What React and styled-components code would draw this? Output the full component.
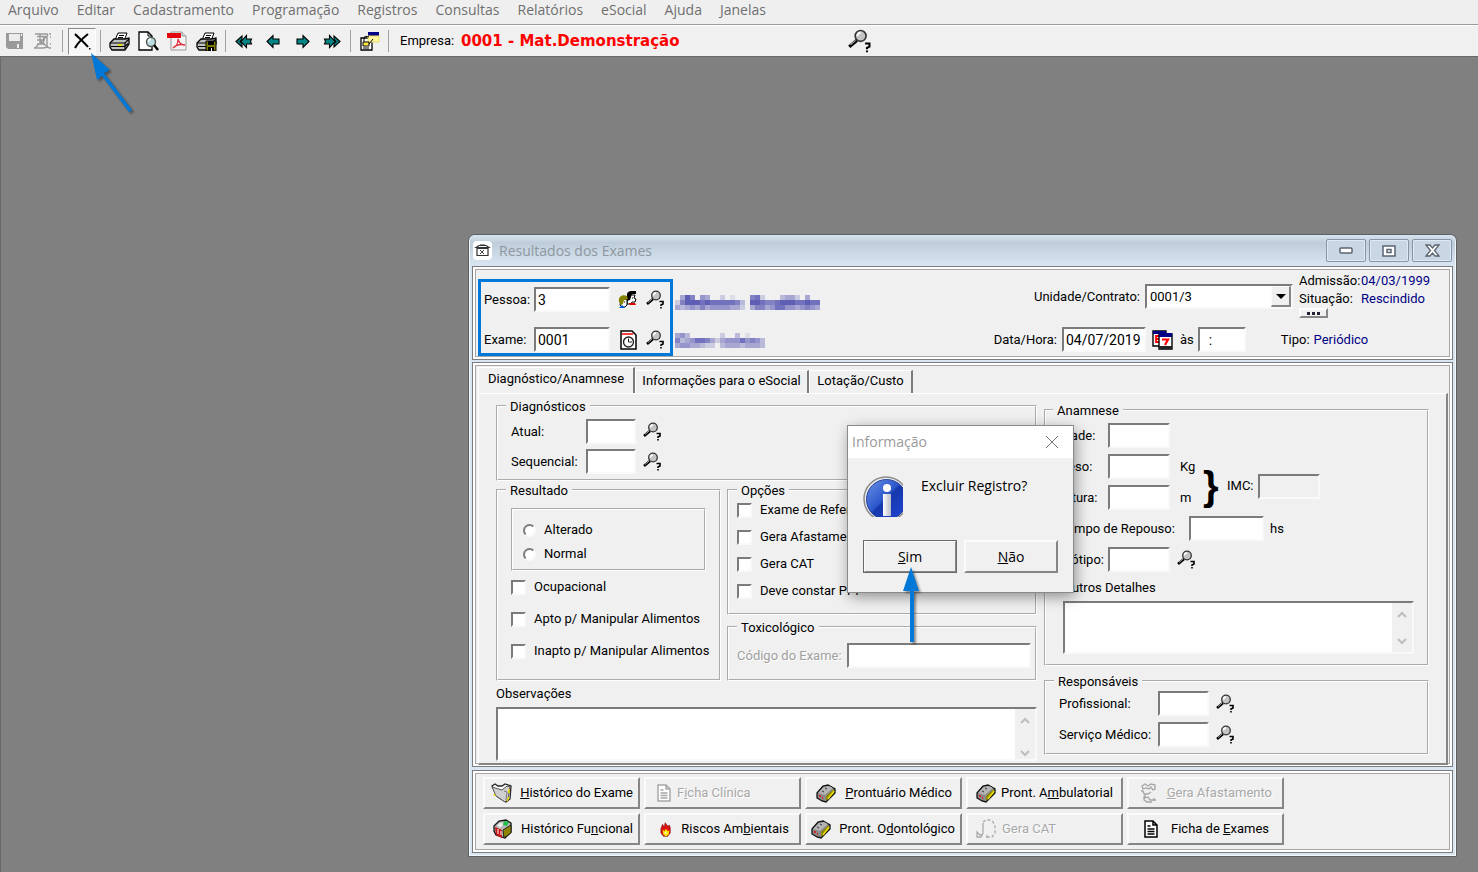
import React from "react";
import styled, { createGlobalStyle, css } from "styled-components";

const Global = createGlobalStyle`
  *, *::before, *::after { box-sizing: border-box; }
  body { margin: 0; background: #808080; color: #000; font: 13px/16px Roboto, "Liberation Sans", sans-serif; }
  button, input, select, textarea { font: inherit; color: inherit; margin: 0; border-radius: 0; }
  svg { flex: none; }
`;

const uiFont = css`
  font-family: "Open Sans", "Noto Sans", sans-serif;
  font-size: 14px;
`;
const sunken = css`
  border: 2px solid;
  border-color: #7b7b7b #f9f9f9 #f9f9f9 #7b7b7b;
`;
const raised = css`
  border: 2px solid;
  border-color: #fbfbfb #868686 #868686 #fbfbfb;
`;

/* ---------- application shell ---------- */
const Shell = styled.div`
  min-height: 100vh;
  display: flex;
  flex-direction: column;
`;
const MenuBar = styled.nav`
  ${uiFont}
  display: flex;
  gap: 18px;
  height: 25px;
  padding: 0 8px;
  background: #efefef;
  border-bottom: 1px solid #9c9c9c;
`;
const MenuItem = styled.button`
  border: 0;
  padding: 0 0 4px;
  background: none;
  color: #6f6f6f;
  line-height: 20px;
`;
const Toolbar = styled.div`
  display: flex;
  align-items: center;
  height: 31px;
  padding: 0 4px;
  background: #f0f0f0;
  border-top: 1px solid #fff;
`;
const ToolGroup = styled.div`
  display: flex;
  gap: 8px;
`;
const ToolButton = styled.button`
  display: flex;
  align-items: center;
  justify-content: center;
  width: ${(p) => p.$w || 21}px;
  height: 27px;
  padding: 0;
  border: ${(p) => (p.$pressed ? "1px solid" : "0")};
  border-color: #8a8a8a #fff #fff #8a8a8a;
  background: ${(p) => (p.$pressed ? "#f7f7f7" : "none")};
`;
const Separator = styled.span`
  width: 1px;
  height: 22px;
  margin: 0 ${(p) => p.$after || 8}px 0 ${(p) => p.$before || 8}px;
  background: #a0a0a0;
`;
const CompanyLabel = styled.span`
  flex: 0 0 61px;
`;
const CompanyName = styled.strong`
  flex: 0 0 387px;
  color: #f00;
  font: bold 15px/18px "DejaVu Sans", sans-serif;
`;
const Desktop = styled.main`
  position: relative;
  flex: 1;
  background: #808080;
  border-top: 1px solid #696969;
  border-left: 1px solid #696969;
`;

/* ---------- child window ---------- */
const Window = styled.section`
  position: absolute;
  top: 177px;
  left: 467px;
  right: 21px;
  padding: 0 3px 3px;
  background: #d9e5f2;
  border: 1px solid #5c6166;
  border-radius: 7px 7px 0 0;
  box-shadow: inset 0 0 0 1px #f3f8fd;
`;
const TitleBar = styled.header`
  ${uiFont}
  display: flex;
  align-items: center;
  gap: 6px;
  height: 31px;
  margin: 0 -2px;
  padding: 0 3px;
  border-radius: 6px 6px 0 0;
  background: linear-gradient(#d8e4ef, #bfcddb 25%, #d9e5f2);
  color: #8e979f;
`;
const Title = styled.h1`
  flex: 1;
  margin: 0;
  font-size: 14px;
  font-weight: 400;
`;
const CaptionButtons = styled.div`
  display: flex;
  gap: 3px;
`;
const CaptionButton = styled.button`
  display: flex;
  align-items: center;
  justify-content: center;
  width: 40px;
  height: 23px;
  padding: 0;
  border: 1px solid #8695a6;
  border-radius: 2px;
  background: #c9d6e4;
  box-shadow: inset 0 0 0 1px #dfe9f3;
`;
const Panel = styled.div`
  margin-bottom: ${(p) => p.$gap || 0}px;
  padding: ${(p) => p.$pad};
  background: #f0f0f0;
  border: 1px solid #7d7d7d;
  box-shadow: inset 0 0 0 2px #fff, inset 0 0 0 3px #a6a6a6;
`;
const HeaderLayout = styled(Panel)`
  display: flex;
  align-items: flex-start;
  gap: 2px;
`;
const KeyFields = styled.div`
  display: flex;
  flex-direction: column;
  gap: 15px;
  width: 195px;
  margin-top: 7px;
  padding: 5px 3px 1px;
  border: 3px solid #0078d7;
`;
const KeyRow = styled.div`
  display: grid;
  grid-template-columns: 50px 76px 36px 19px;
  align-items: center;
`;
const IconCell = styled.span`
  display: flex;
  justify-content: center;
`;
const Names = styled.div`
  flex: 1;
  display: flex;
  flex-direction: column;
  gap: 23px;
  padding-top: 23px;
`;
const Contract = styled.div`
  display: flex;
  flex-direction: column;
  gap: 9px;
  width: 450px;
`;
const ContractRow = styled.div`
  display: flex;
  align-items: center;
  padding-top: ${(p) => p.$top || 0}px;
`;
const ContractTop = styled.div`
  display: flex;
  align-items: flex-start;
`;
const ContractLabel = styled.label`
  flex: 0 0 ${(p) => p.$w}px;
  padding-right: 5px;
  text-align: right;
  white-space: nowrap;
`;
const SelectFrame = styled.span`
  position: relative;
  display: flex;
  flex: 0 0 148px;
  margin-right: 6px;
`;
const Select = styled.select`
  ${sunken}
  width: 100%;
  height: 25px;
  padding: 0 3px;
  background: #fff;
  appearance: none;
`;
const SelectArrow = styled.span`
  position: absolute;
  top: 2px;
  right: 2px;
  display: flex;
  align-items: center;
  justify-content: center;
  width: 20px;
  height: 21px;
  background: #f0f0f0;
  ${raised}
  border-width: 1px 2px 2px 1px;
  pointer-events: none;
`;
const Status = styled.div`
  display: flex;
  flex-direction: column;
  line-height: 18px;
  white-space: nowrap;
`;
const StatusLine = styled.span`
  display: grid;
  grid-template-columns: 62px auto;
`;
const Value = styled.span`
  color: #000084;
`;
const MoreButton = styled.button`
  ${raised}
  display: flex;
  align-items: center;
  justify-content: center;
  width: 29px;
  height: 10px;
  padding: 0;
  background: #f0f0f0;
`;
const TypeLabel = styled.span`
  display: flex;
  gap: 4px;
  margin-left: 35px;
`;
const Field = styled.input`
  ${sunken}
  width: ${(p) => (p.$w ? `${p.$w}px` : "100%")};
  height: 25px;
  padding: 0 2px;
  font-size: 14px;
  background: ${(p) => (p.readOnly ? "#f0f0f0" : "#fff")};
`;

/* ---------- tabs ---------- */
const TabList = styled.div`
  display: flex;
  align-items: flex-end;
  height: 26px;
`;
const Tab = styled.button`
  height: ${(p) => (p.$active ? 26 : 23)}px;
  width: ${(p) => p.$w}px;
  padding: 0 0 ${(p) => (p.$active ? 3 : 2)}px;
  border: solid;
  border-width: 1px 2px 0 1px;
  border-color: #fff #7b7b7b #fff #fff;
  background: #f0f0f0;
  white-space: nowrap;
`;
const TabPage = styled.div`
  display: grid;
  grid-template-columns: 541fr 385fr;
  gap: 7px;
  align-items: start;
  padding: 4px 17px 2px;
  border: solid;
  border-width: 1px 2px 2px 1px;
  border-color: #fff #868686 #868686 #fff;
`;
const Group = styled.fieldset`
  min-width: 0;
  margin: 0;
  padding: ${(p) => p.$pad};
  border: 2px groove #fff;
`;
const Legend = styled.legend`
  margin-left: ${(p) => p.$indent || 0}px;
  padding: 2px 4px 0;
  line-height: 14px;
`;
const LeftColumn = styled.div`
  display: flex;
  flex-direction: column;
  gap: 1px;
`;
const RightColumn = styled.div`
  display: flex;
  flex-direction: column;
  gap: 7px;
  padding-top: 4px;
`;
const Split = styled.div`
  display: grid;
  grid-template-columns: 225px 1fr;
  gap: 6px;
`;
const Stack = styled.div`
  display: flex;
  flex-direction: column;
  gap: ${(p) => p.$gap || 0}px;
`;
const FormRow = styled.div`
  display: flex;
  align-items: center;
  white-space: nowrap;
`;
const RowLabel = styled.label`
  flex: 0 0 ${(p) => p.$w}px;
  color: ${(p) => (p.$dim ? "#a0a0a0" : "inherit")};
  text-shadow: ${(p) => (p.$dim ? "1px 1px #fff" : "none")};
`;
const Lookup = styled.button`
  display: flex;
  margin-left: ${(p) => p.$m || 0}px;
  padding: 0;
  border: 0;
  background: none;
`;
const Unit = styled.span`
  margin-left: ${(p) => p.$m}px;
`;
const BodyMass = styled.div`
  display: flex;
  align-items: center;
`;
const Measures = styled(Stack)`
  flex: 0 0 137px;
`;
const MassIndex = styled.div`
  display: flex;
  align-items: center;
  padding-top: 8px;
`;
const Brace = styled.span`
  flex: 0 0 30px;
  padding-left: 6px;
  font: bold 40px/44px "Liberation Sans", sans-serif;
`;
const RadioBox = styled.div`
  display: flex;
  flex-direction: column;
  gap: 8px;
  height: 63px;
  padding: 12px 10px;
  border: 2px groove #fff;
`;
const CheckRow = styled.label`
  display: flex;
  align-items: center;
  gap: 8px;
  height: 16px;
  white-space: nowrap;
`;
const Check = styled.input`
  ${sunken}
  flex: none;
  width: 15px;
  height: 15px;
  background: #fff;
  appearance: none;
`;
const Radio = styled.input`
  ${sunken}
  flex: none;
  width: 13px;
  height: 13px;
  && { border-radius: 50%; }
  background: #fff;
  appearance: none;
`;
const Memo = styled.div`
  ${sunken}
  display: flex;
  height: ${(p) => p.$h}px;
  background: #fff;
`;
const MemoText = styled.textarea`
  flex: 1;
  min-width: 0;
  border: 0;
  resize: none;
  overflow: hidden;
  background: #fff;
`;
const MemoRail = styled.div`
  display: flex;
  flex-direction: column;
  justify-content: space-between;
  align-items: center;
  width: 20px;
  padding: 8px 0 ${(p) => p.$bottom || 7}px;
  background: #f0f0f0;
`;
const MemoLabel = styled.label`
  padding: ${(p) => p.$pad};
`;
const Details = styled.div`
  padding-left: 3px;
`;

/* ---------- bottom actions ---------- */
const Actions = styled.div`
  display: grid;
  grid-template-columns: repeat(5, 157px);
  gap: 4px;
`;
const Action = styled.button`
  ${raised}
  display: flex;
  align-items: center;
  height: 32px;
  padding: 0 5px 0 ${(p) => p.$pad || 6}px;
  background: #f0f0f0;
  color: ${(p) => (p.disabled ? "#a8a8a8" : "#000")};
  text-shadow: ${(p) => (p.disabled ? "1px 1px #fff" : "none")};
  white-space: nowrap;
`;
const ActionText = styled.span`
  flex: 1;
  text-align: ${(p) => (p.$left ? "left" : "right")};
  padding-left: ${(p) => (p.$left ? 6 : 0)}px;
  padding-right: ${(p) => p.$right || 0}px;
`;

/* ---------- dialog ---------- */
const Dialog = styled.div`
  ${uiFont}
  position: absolute;
  top: 369px;
  left: 847px;
  width: 225px;
  background: #f0f0f0;
  outline: 1px solid #8a8a8a;
  box-shadow: 2px 4px 14px rgba(0, 0, 0, 0.45);
`;
const DialogTitle = styled.header`
  display: flex;
  align-items: center;
  justify-content: space-between;
  height: 32px;
  padding: 0 15px 0 4px;
  background: #fff;
  color: #9a9a9a;
`;
const DialogClose = styled.button`
  display: flex;
  padding: 0;
  border: 0;
  background: none;
`;
const DialogBody = styled.div`
  display: flex;
  gap: 18px;
  padding: 18px 15px 23px;
`;
const Message = styled.p`
  margin: 2px 0 0;
`;
const DialogButtons = styled.div`
  display: grid;
  grid-template-columns: 94px 94px;
  gap: 7px;
  padding: 0 15px 19px;
`;
const DialogButton = styled.button`
  ${raised}
  height: 33px;
  padding: 0;
  background: #f0f0f0;
  outline: ${(p) => (p.$default ? "1px solid #6a6a6a" : "none")};
  outline-offset: -1px;
`;
const Arrow = styled.svg`
  position: absolute;
  top: ${(p) => p.$top}px;
  left: ${(p) => p.$left}px;
  filter: drop-shadow(2px 2px 1px rgba(0, 0, 0, 0.4));
  pointer-events: none;
`;

/* ---------- icons ---------- */
const Magnifier = ({ size = 19 }) => (
  <svg width={size} height={size} viewBox="0 0 19 19">
    <path d="M1 14l6-5" stroke="#000" strokeWidth="2.600" />
    <path d="M2 12.500l4-3.500" stroke="#aaa" />
    <circle cx="10" cy="5.500" r="4.300" fill="#c4c4c4" stroke="#333" strokeWidth="1.300" />
    <path d="M7.500 5.500a2.500 2.500 0 0 1 2.500-2.500" stroke="#fff" strokeWidth="1.500" fill="none" />
    <path d="M13.500 11.500h3.500v2.500l-2 1v1M15 17v1.500" stroke="#000" strokeWidth="1.600" fill="none" />
  </svg>
);
const PrinterIcon = ({ disk }) => (
  <svg width="21" height="19" viewBox="0 0 21 19">
    <path d="M6 8L9 1h9l-3 8z" fill="#fff" stroke="#000" />
    <path d="M10 3.500h5M9 5.500h5M8 7.500h5" stroke="#000" />
    <path d="M1 11l4-4h11l4-1v6l-4 6H3l-2-3z" fill="#c0c0c0" stroke="#000" strokeWidth="1.300" />
    <path d="M1 11h15l4-4M2 14.500h14l3-3M16 11v6" stroke="#000" fill="none" strokeWidth="1.200" />
    <path d="M9 13h4" stroke="#e8e000" strokeWidth="2" />
    {disk && (
      <g>
        <path d="M10 9h10v10H10z" fill="#7b7b00" stroke="#000" />
        <path d="M12 9h6v4h-6zM12 15h6v4h-6z" fill="#000" />
        <path d="M15.500 16v3" stroke="#fff" />
      </g>
    )}
  </svg>
);
const SaveIcon = () => (
  <svg width="19" height="18" viewBox="0 0 19 18">
    <path d="M1 1h17v16H3l-2-2z" fill="#9a9a9a" />
    <path d="M4 2h11v7H4zM12 12h2v4h-2z" fill="#ececec" />
    <path d="M16 2h1v2h-1z" fill="#fff" />
  </svg>
);
const DiscardIcon = () => (
  <svg width="19" height="18" viewBox="0 0 19 18" fill="none" stroke="#9a9a9a" strokeWidth="1.400">
    <path d="M2 2h13M4 4.500h10v9.500M4 8h8M7 2v10M10.500 4v8M2 16L15 3M1 16h9l5-1M8 10l8 6M4 12h8" />
    <path d="M16 2h2M17 5h1M17 12h1M16 16h2" />
  </svg>
);
const DeleteIcon = () => (
  <svg width="18" height="18" viewBox="0 0 18 18">
    <path d="M2 2c4 4 9 8 13 13M15 2C10 6 5 10 2 16" stroke="#000" strokeWidth="2" fill="none" />
    <path d="M16 16h1.500v1.500H16z" />
  </svg>
);
const PreviewIcon = () => (
  <svg width="21" height="20" viewBox="0 0 21 20">
    <path d="M1 1h9l4 4v14H1z" fill="#fff" stroke="#000" strokeWidth="1.300" />
    <path d="M10 1v4h4" fill="none" stroke="#000" />
    <circle cx="13" cy="11" r="4.500" fill="#b8dce0" stroke="#555" strokeWidth="1.400" />
    <path d="M11 11a2 2 0 0 1 2-3" stroke="#fff" fill="none" strokeWidth="1.400" />
    <path d="M16 14l4 5" stroke="#000" strokeWidth="2.400" />
  </svg>
);
const PdfIcon = () => (
  <svg width="21" height="20" viewBox="0 0 21 20">
    <path d="M4 1h11l4 4v14H4z" fill="#f4f4f4" stroke="#999" />
    <path d="M15 1v4h4" fill="#ddd" stroke="#999" />
    <path d="M0 2h14v5H0z" fill="#e3060f" />
    <path d="M6 17c3-1 5-5 5-9 1 4 3 6 7 6-4-1-9 0-12 3z" fill="none" stroke="#e3303a" strokeWidth="1.300" />
  </svg>
);
const NavArrow = ({ back, twice }) => (
  <svg width="19" height="15" viewBox="0 0 19 15">
    <g transform={back ? undefined : "matrix(-1 0 0 1 19 0)"} fill="#008484" stroke="#000" strokeWidth="1.100">
      {twice ? (
        <>
          <path d="M6 7.500L11.500 1.500V5h5l-1 2.500 1 2.500h-5v3.500z" />
          <path d="M1 7.500L7 2v3.500l-2 2 2 2V13z" />
        </>
      ) : (
        <path d="M3 7.500L9 1.500V5h6v5H9v3.500z" />
      )}
    </g>
  </svg>
);
const FormsIcon = () => (
  <svg width="21" height="20" viewBox="0 0 21 20">
    <path d="M2 7h11v12H2z" fill="#fff" stroke="#000" strokeWidth="1.300" />
    <path d="M9 1h11v4H9z" fill="#000084" />
    <path d="M9 5h11v6H9z" fill="#fff7a0" stroke="#e8dc60" />
    <path d="M4 11h6v4H4z" fill="#ffe84a" stroke="#000" />
    <path d="M5 11V7c0-2 3-2 5-1M10 13l4-5M4 17h6" stroke="#000" fill="none" />
  </svg>
);
const WindowIcon = () => (
  <svg width="20" height="20" viewBox="0 0 20 20">
    <rect x="0" y="0" width="19" height="19" rx="4" fill="#fff" />
    <path d="M4 7.500h11v7H4zM3 6.500l3-2h7l3 2zM7 4h5" fill="none" stroke="#333" strokeWidth="1.200" />
    <path d="M7 9l4 4M11 9l-4 4" stroke="#444" />
  </svg>
);
const PeopleIcon = () => (
  <svg width="20" height="19" viewBox="0 0 20 19">
    <path d="M10 5h7l-1 3 2 1-1 3h-3l-1 2h-4z" fill="#fff" stroke="#000" />
    <path d="M9 5c0-3 2-4 5-4h4v3h-4l-1 3-1 3-3 1z" fill="#000" />
    <path d="M3 10l6-1v6l-2 2H4l-2-2z" fill="#fff" stroke="#000" />
    <path d="M1 12c-1-5 3-8 8-6l1 3-4 1-1 4-2 1z" fill="#848400" />
    <path d="M1 18l3-3 3 3z" fill="#0057d9" />
    <path d="M11 13h6l1 2h-6z" fill="#e00000" />
    <path d="M6 12h1M14 8h1" stroke="#000" />
  </svg>
);
const ClockIcon = () => (
  <svg width="17" height="20" viewBox="0 0 17 20">
    <path d="M1 1h11l4 4v14H1z" fill="#fff" stroke="#000" strokeWidth="1.500" />
    <path d="M2 4h11" stroke="#f04040" strokeWidth="2" />
    <circle cx="8.500" cy="12" r="5" fill="#fff" stroke="#222" strokeWidth="1.400" />
    <path d="M8.500 8.500V12H12" stroke="#222" fill="none" />
  </svg>
);
const CalendarIcon = () => (
  <svg width="21" height="20" viewBox="0 0 21 20">
    <path d="M1 1h13v15H1z" fill="#fff" stroke="#000" strokeWidth="1.400" />
    <path d="M1 1h13v3H1z" fill="#000084" />
    <path d="M7 6H4v3h3M4 9v3h3" stroke="#f00" strokeWidth="1.800" fill="none" />
    <path d="M7 4h13v15H7z" fill="#fff" stroke="#000" strokeWidth="1.400" />
    <path d="M7 3h13v4H7z" fill="#000084" />
    <path d="M10 9.500h6l-3 5.500" stroke="#f00" strokeWidth="2.200" fill="none" />
    <path d="M7 17.500h13" stroke="#222" strokeWidth="3" />
  </svg>
);
const FolderIcon = () => (
  <svg width="21" height="20" viewBox="0 0 21 20">
    <path d="M1 3l3-2 3 2h4l3-2 6 2-1 13-4 3-8-5z" fill="#fff" stroke="#222" strokeWidth="1.300" />
    <path d="M1 4l10 3 5-4 3 1-2 12-3 3-9-6z" fill="#cfcfcf" stroke="#555" />
    <path d="M13 8l3 1-1 8" stroke="#777" fill="none" />
    <path d="M3 11l1 2M16 18l2-4M18 6v4" stroke="#eede00" strokeWidth="1.600" />
  </svg>
);
const CabinetIcon = () => (
  <svg width="20" height="20" viewBox="0 0 20 20">
    <path d="M1 7l5-5 7-1 5 3v9l-6 6-9-3-2-4z" fill="#b5b5b5" stroke="#111" strokeWidth="1.300" />
    <path d="M2 8l7 3v8l-6-3z" fill="#c81414" />
    <path d="M10 11l8-5v8l-7 5z" fill="#8c8400" stroke="#222" />
    <path d="M11 2l5 1-2 4-4-1z" fill="#1fc04a" />
    <path d="M4 6l5-3 1 3-3 3z" fill="#eee" />
    <path d="M5 10v5M8 12v4" stroke="#fff" />
  </svg>
);
const BinderIcon = () => (
  <svg width="20" height="20" viewBox="0 0 20 20">
    <path d="M1 10l6-7 5-1 7 4v4l-9 9-4-1-5-3z" fill="#8a8a8a" stroke="#111" strokeWidth="1.300" />
    <path d="M2 10l6-6 5-1 4 2-8 7z" fill="#b4b4b4" />
    <path d="M10 18v-5l8-7v4z" fill="#8f8a00" />
    <path d="M12 16l6-8" stroke="#f0e000" strokeWidth="1.400" />
    <path d="M3 13h2M6 15h1" stroke="#e02020" strokeWidth="2" />
    <path d="M6 8l2 1M9 5l2 1" stroke="#333" />
  </svg>
);
const FlameIcon = () => (
  <svg width="12" height="17" viewBox="0 0 14 18">
    <path d="M3 3l2 3 1-5 3 4 2-1 1 3v6l-3 4H4l-3-4V8z" fill="#e01010" stroke="#600" strokeWidth=".6" />
    <path d="M3 9l2 2 2-3 2 3 2-1-1 5-3 2-3-2z" fill="#ffea00" />
    <path d="M6 12l1 2" stroke="#fff" strokeWidth="1.500" />
  </svg>
);
const SheetIcon = ({ color = "#000" }) => (
  <svg width="14" height="18" viewBox="0 0 14 18" fill="none" stroke={color} strokeWidth="1.500">
    <path d="M1 1h8l4 4v12H1zM9 1v4h4" fill="#fff" />
    <path d="M3.500 6h3M3.500 9h7M3.500 11.500h7M3.500 14h7" />
  </svg>
);
const PatientIcon = () => (
  <svg width="18" height="20" viewBox="0 0 18 20" fill="none" stroke="#a6a6a6" strokeWidth="1.300">
    <path d="M2 3l3-2 3 2 3-2 4 1v4l-2 1-2-3-2 2-3-1-3 1zM1 8h2l1 3h4l3-2M5 11v4l3-1 2 3h6M4 13v4l3 2h5M10 4l2 1M14 15v3" />
  </svg>
);
const CatIcon = () => (
  <svg width="20" height="20" viewBox="0 0 20 20" fill="none" stroke="#ababab" strokeWidth="1.300">
    <path d="M7 3l3-2h4l3 2 2 4v7l-3 4h-6" strokeDasharray="3 2" />
    <path d="M7 4v10l-2 4H1v-5l3 3 3-1M11 16v3" />
  </svg>
);
const Chevron = ({ down }) => (
  <svg width="10" height="7" viewBox="0 0 10 7">
    <path d={down ? "M1 1l4 4 4-4" : "M1 6l4-4 4 4"} fill="none" stroke="#bdbdbd" strokeWidth="2" />
  </svg>
);
const InfoIcon = () => (
  <svg width="40" height="41" viewBox="0 0 40 41">
    <defs>
      <linearGradient id="infoBlue" x1="0" y1="0" x2="1" y2="1">
        <stop offset="0" stopColor="#6d93e4" />
        <stop offset=".45" stopColor="#2c58cc" />
        <stop offset=".5" stopColor="#1538ab" />
        <stop offset="1" stopColor="#2145da" />
      </linearGradient>
      <linearGradient id="infoStem" x1="0" y1="0" x2="1" y2="0">
        <stop offset="0" stopColor="#fff" />
        <stop offset="1" stopColor="#b8bcc8" />
      </linearGradient>
    </defs>
    <circle cx="23" cy="23" r="22" fill="#ececec" stroke="#8b8b8b" strokeWidth="1.500" />
    <circle cx="23.500" cy="23.500" r="20" fill="url(#infoBlue)" stroke="#26439c" />
    <circle cx="24" cy="12" r="4" fill="#fff" />
    <path d="M20 18h8v22h-8z" fill="url(#infoStem)" />
  </svg>
);

const FULL_NAME = [
  "04860540020100067200034420400",
  "26888787777763088766788877877",
  "43454645555442046645775545654",
];
const EXAM_NAME = ["453000000200301000", "634577642455575653", "455443220344434443"];

const Mosaic = ({ rows }) => (
  <svg width={rows[0].length * 5} height="15" role="img" aria-label="oculto">
    {rows.flatMap((row, y) =>
      [...row].map((n, x) => (
        <rect key={`${x}-${y}`} x={x * 5} y={y * 5} width="5" height="5" fill="#3a3aa6" opacity={n / 10} />
      ))
    )}
  </svg>
);

const MENUS = ["Arquivo", "Editar", "Cadastramento", "Programação", "Registros", "Consultas", "Relatórios", "eSocial", "Ajuda", "Janelas"];

const CheckItem = ({ children }) => (
  <CheckRow>
    <Check type="checkbox" />
    {children}
  </CheckRow>
);
const LookupField = ({ id, label, labelWidth, width }) => (
  <FormRow>
    <RowLabel htmlFor={id} $w={labelWidth}>{label}</RowLabel>
    <Field id={id} $w={width} />
    <Lookup $m={7} aria-label="Pesquisar"><Magnifier /></Lookup>
  </FormRow>
);
const MemoBox = ({ id, height, railBottom }) => (
  <Memo $h={height}>
    <MemoText id={id} />
    <MemoRail $bottom={railBottom}>
      <Chevron />
      <Chevron down />
    </MemoRail>
  </Memo>
);

export default function App() {
  return (
    <Shell>
      <Global />
      <MenuBar>
        {MENUS.map((m) => <MenuItem key={m}>{m}</MenuItem>)}
      </MenuBar>
      <Toolbar>
        <ToolGroup>
          <ToolButton $w={20} aria-label="Salvar"><SaveIcon /></ToolButton>
          <ToolButton $w={20} aria-label="Cancelar"><DiscardIcon /></ToolButton>
        </ToolGroup>
        <Separator $before={10} $after={5} />
        <ToolButton $w={28} $pressed aria-label="Excluir"><DeleteIcon /></ToolButton>
        <Separator $before={4} />
        <ToolGroup>
          <ToolButton aria-label="Imprimir"><PrinterIcon /></ToolButton>
          <ToolButton aria-label="Visualizar"><PreviewIcon /></ToolButton>
          <ToolButton aria-label="PDF"><PdfIcon /></ToolButton>
          <ToolButton aria-label="Imprimir em disco"><PrinterIcon disk /></ToolButton>
        </ToolGroup>
        <Separator />
        <ToolGroup>
          <ToolButton aria-label="Primeiro"><NavArrow back twice /></ToolButton>
          <ToolButton aria-label="Anterior"><NavArrow back /></ToolButton>
          <ToolButton aria-label="Próximo"><NavArrow /></ToolButton>
          <ToolButton aria-label="Último"><NavArrow twice /></ToolButton>
        </ToolGroup>
        <Separator $after={8} />
        <ToolButton aria-label="Formulários"><FormsIcon /></ToolButton>
        <Separator $after={11} />
        <CompanyLabel>Empresa:</CompanyLabel>
        <CompanyName>0001 - Mat.Demonstração</CompanyName>
        <ToolButton $w={24} aria-label="Pesquisar empresa"><Magnifier size={24} /></ToolButton>
      </Toolbar>

      <Desktop>
        <Window>
          <TitleBar>
            <WindowIcon />
            <Title>Resultados dos Exames</Title>
            <CaptionButtons>
              <CaptionButton aria-label="Minimizar">
                <svg width="14" height="7"><rect x="1" y="1" width="12" height="5" rx="1" fill="#fff" stroke="#5b6470" strokeWidth="1.500" /></svg>
              </CaptionButton>
              <CaptionButton aria-label="Restaurar">
                <svg width="14" height="12"><path d="M1 1h12v10H1zM5 4.500h4v3H5z" fill="#fff" stroke="#5b6470" strokeWidth="1.500" /></svg>
              </CaptionButton>
              <CaptionButton aria-label="Fechar">
                <svg width="15" height="13"><path d="M1 1h4l2.500 3L10 1h4l-4.500 5.500L14 12h-4L7.500 9 5 12H1l4.500-5.500z" fill="#fff" stroke="#5b6470" strokeWidth="1.300" /></svg>
              </CaptionButton>
            </CaptionButtons>
          </TitleBar>

          <HeaderLayout $gap={2} $pad="5px 12px 3px 5px">
            <KeyFields>
              <KeyRow>
                <label htmlFor="pessoa">Pessoa:</label>
                <Field id="pessoa" defaultValue="3" />
                <IconCell><PeopleIcon /></IconCell>
                <Lookup aria-label="Pesquisar"><Magnifier /></Lookup>
              </KeyRow>
              <KeyRow>
                <label htmlFor="exame">Exame:</label>
                <Field id="exame" defaultValue="0001" />
                <IconCell><ClockIcon /></IconCell>
                <Lookup aria-label="Pesquisar"><Magnifier /></Lookup>
              </KeyRow>
            </KeyFields>
            <Names>
              <Mosaic rows={FULL_NAME} />
              <Mosaic rows={EXAM_NAME} />
            </Names>
            <Contract>
              <ContractTop>
                <ContractRow $top={12}>
                  <ContractLabel htmlFor="unidade" $w={155}>Unidade/Contrato:</ContractLabel>
                  <SelectFrame>
                    <Select id="unidade" defaultValue="0001/3"><option>0001/3</option></Select>
                    <SelectArrow>
                      <svg width="10" height="5"><path d="M0 0h10L5 5z" /></svg>
                    </SelectArrow>
                  </SelectFrame>
                </ContractRow>
                <Status>
                  <StatusLine>Admissão:<Value>04/03/1999</Value></StatusLine>
                  <StatusLine>Situação:<Value>Rescindido</Value></StatusLine>
                  <MoreButton aria-label="Mais">
                    <svg width="13" height="3"><path d="M0 0h3v3H0zM5 0h3v3H5zM10 0h3v3h-3z" fill="#223" /></svg>
                  </MoreButton>
                </Status>
              </ContractTop>
              <ContractRow>
                <ContractLabel htmlFor="data" $w={72}>Data/Hora:</ContractLabel>
                <Field id="data" $w={84} defaultValue="04/07/2019" />
                <Lookup $m={6} aria-label="Calendário"><CalendarIcon /></Lookup>
                <Unit as="label" htmlFor="hora" $m={7}>às</Unit>
                <Unit $m={4}><Field id="hora" $w={48} defaultValue="  :" /></Unit>
                <TypeLabel>Tipo:<Value>Periódico</Value></TypeLabel>
              </ContractRow>
            </Contract>
          </HeaderLayout>

          <Panel $gap={3} $pad="4px 4px 1px 5px">
            <TabList role="tablist">
              <Tab role="tab" $active $w={157}>Diagnóstico/Anamnese</Tab>
              <Tab role="tab" $w={174}>Informações para o eSocial</Tab>
              <Tab role="tab" $w={104}>Lotação/Custo</Tab>
            </TabList>
            <TabPage>
              <LeftColumn>
                <Group $pad="5px 13px">
                  <Legend $indent={-5}>Diagnósticos</Legend>
                  <Stack $gap={5}>
                    <LookupField id="atual" label="Atual:" labelWidth={75} width={50} />
                    <LookupField id="seq" label="Sequencial:" labelWidth={75} width={50} />
                  </Stack>
                </Group>
                <Split>
                  <Group $pad="10px 13px 20px">
                    <Legend $indent={-5}>Resultado</Legend>
                    <Stack $gap={8}>
                      <RadioBox>
                        <CheckRow><Radio type="radio" name="resultado" />Alterado</CheckRow>
                        <CheckRow><Radio type="radio" name="resultado" />Normal</CheckRow>
                      </RadioBox>
                      <Stack $gap={16}>
                        <CheckItem>Ocupacional</CheckItem>
                        <CheckItem>Apto p/ Manipular Alimentos</CheckItem>
                        <CheckItem>Inapto p/ Manipular Alimentos</CheckItem>
                      </Stack>
                    </Stack>
                  </Group>
                  <Stack $gap={4}>
                    <Group $pad="4px 8px 14px">
                      <Legend>Opções</Legend>
                      <Stack $gap={11}>
                        <CheckItem>Exame de Referência</CheckItem>
                        <CheckItem>Gera Afastamento</CheckItem>
                        <CheckItem>Gera CAT</CheckItem>
                        <CheckItem>Deve constar PPP</CheckItem>
                      </Stack>
                    </Group>
                    <Group $pad="8px 4px 11px 8px">
                      <Legend>Toxicológico</Legend>
                      <FormRow>
                        <RowLabel htmlFor="codigo" $w={110} $dim>Código do Exame:</RowLabel>
                        <Field id="codigo" />
                      </FormRow>
                    </Group>
                  </Stack>
                </Split>
                <MemoLabel htmlFor="obs" $pad="4px 0">Observações</MemoLabel>
                <MemoBox id="obs" height={54} railBottom={2} />
              </LeftColumn>

              <RightColumn>
                <Group $pad="5px 13px 10px 14px">
                  <Legend $indent={-7}>Anamnese</Legend>
                  <Stack $gap={6}>
                    <FormRow><RowLabel htmlFor="idade" $w={48}>Idade:</RowLabel><Field id="idade" $w={62} /></FormRow>
                    <BodyMass>
                      <Measures $gap={6}>
                        <FormRow><RowLabel htmlFor="peso" $w={48}>Peso:</RowLabel><Field id="peso" $w={62} /><Unit $m={10}>Kg</Unit></FormRow>
                        <FormRow><RowLabel htmlFor="altura" $w={48}>Altura:</RowLabel><Field id="altura" $w={62} /><Unit $m={10}>m</Unit></FormRow>
                      </Measures>
                      <MassIndex>
                        <Brace>{"}"}</Brace>
                        <RowLabel htmlFor="imc" $w={31}>IMC:</RowLabel>
                        <Field id="imc" $w={62} readOnly />
                      </MassIndex>
                    </BodyMass>
                    <FormRow><RowLabel htmlFor="repouso" $w={129}>Tempo de Repouso:</RowLabel><Field id="repouso" $w={75} /><Unit $m={6}>hs</Unit></FormRow>
                    <LookupField id="biotipo" label="Biótipo:" labelWidth={48} width={62} />
                  </Stack>
                  <Details>
                    <Stack>
                      <MemoLabel htmlFor="detalhes" $pad="8px 0 5px">Outros Detalhes</MemoLabel>
                      <MemoBox id="detalhes" height={53} />
                    </Stack>
                  </Details>
                </Group>
                <Group $pad="2px 13px 6px">
                  <Legend $indent={-5}>Responsáveis</Legend>
                  <Stack $gap={6}>
                    <LookupField id="prof" label="Profissional:" labelWidth={99} width={51} />
                    <LookupField id="serv" label="Serviço Médico:" labelWidth={99} width={51} />
                  </Stack>
                </Group>
              </RightColumn>
            </TabPage>
          </Panel>

          <Panel $pad="6px 10px 7px">
            <Actions>
              <Action><FolderIcon /><ActionText><u>H</u>istórico do Exame</ActionText></Action>
              <Action disabled $pad={11}><SheetIcon color="#a8a8a8" /><ActionText $left>F<u>i</u>cha Clínica</ActionText></Action>
              <Action $pad={9}><BinderIcon /><ActionText $right={3}><u>P</u>rontuário Médico</ActionText></Action>
              <Action $pad={8}><BinderIcon /><ActionText $right={3}>Pront. A<u>m</u>bulatorial</ActionText></Action>
              <Action disabled $pad={11}><PatientIcon /><ActionText $right={5}><u>G</u>era Afastamento</ActionText></Action>
              <Action $pad={8}><CabinetIcon /><ActionText>Histórico Fu<u>n</u>cional</ActionText></Action>
              <Action $pad={14}><FlameIcon /><ActionText $right={5}>Riscos Am<u>b</u>ientais</ActionText></Action>
              <Action $pad={4}><BinderIcon /><ActionText>Pront. O<u>d</u>ontológico</ActionText></Action>
              <Action disabled $pad={8}><CatIcon /><ActionText $left>Gera CAT</ActionText></Action>
              <Action $pad={15}><SheetIcon /><ActionText $right={8}>Ficha de <u>E</u>xames</ActionText></Action>
            </Actions>
          </Panel>
        </Window>

        <Dialog role="dialog" aria-label="Informação">
          <DialogTitle>
            Informação
            <DialogClose aria-label="Fechar">
              <svg width="12" height="12"><path d="M0 0l12 12M12 0L0 12" stroke="#777" /></svg>
            </DialogClose>
          </DialogTitle>
          <DialogBody>
            <InfoIcon />
            <Message>Excluir Registro?</Message>
          </DialogBody>
          <DialogButtons>
            <DialogButton $default><u>S</u>im</DialogButton>
            <DialogButton><u>N</u>ão</DialogButton>
          </DialogButtons>
        </Dialog>

        <Arrow $top={-4} $left={89} width="46" height="62">
          <path d="M1 0l19 17-6 3 28 37-3 2-27-36-5 4z" fill="#0078d7" />
        </Arrow>
        <Arrow $top={510} $left={901} width="20" height="78">
          <path d="M9 0l8 24h-5v51H8V24H1z" fill="#0078d7" />
        </Arrow>
      </Desktop>
    </Shell>
  );
}
